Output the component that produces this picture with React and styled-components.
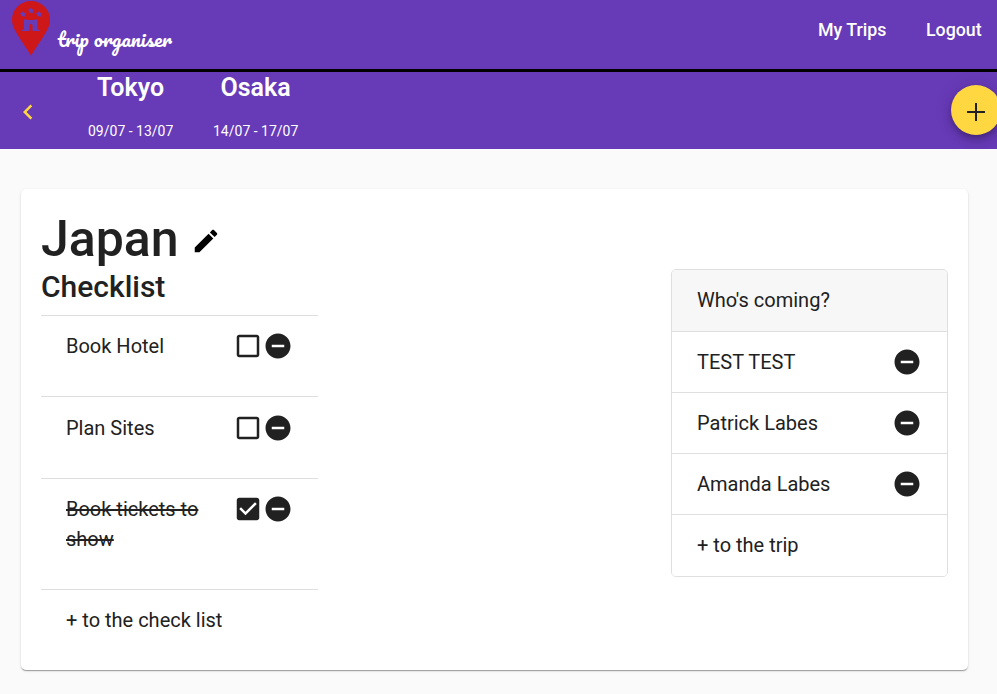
import React from "react";
import styled, { createGlobalStyle } from "styled-components";

const GlobalStyle = createGlobalStyle`
  * { box-sizing: border-box; }
  html, body { margin: 0; padding: 0; overflow: hidden; }
  body {
    background: #fafafa;
    color: #212121;
    font-family: Roboto, sans-serif;
    font-size: 20px;
    font-weight: 400;
    line-height: 30px;
  }
  h1, h2, h3, p, ul { margin: 0; padding: 0; }
`;

const Page = styled.div`
  height: 694px;
  overflow: hidden;
`;

const Header = styled.header`
  display: flex;
  justify-content: space-between;
  height: 72px;
  padding: 0 16px 0 12px;
  background: #673ab7;
  border-bottom: 3px solid #000;
  color: #fff;
`;

const Brand = styled.div`
  display: flex;
  gap: 8px;
`;

const Pin = styled.svg`
  width: 38px;
  height: 55px;
  margin-top: 1px;
  flex: none;
`;

const Wordmark = styled.svg`
  width: 116px;
  height: 40px;
  margin-top: 19px;
  overflow: visible;
  fill: #fff;
  font-family: Pacifico, cursive;
  font-size: 20px;
`;

const Nav = styled.nav`
  display: flex;
  gap: 40px;
  padding-top: 15px;
  font-size: 17.8px;
  font-weight: 500;
`;

const NavLink = styled.span`
  width: ${(p) => p.$width}px;
  white-space: nowrap;
`;

const CityBar = styled.section`
  display: flex;
  height: 77px;
  background: #673ab7;
  color: #fff;
`;

const Back = styled.svg`
  width: 30px;
  height: 30px;
  margin: 25px 0 0 13px;
  fill: #ffd740;
`;

const Cities = styled.div`
  display: flex;
  gap: 40px;
  margin-left: 45px;
`;

const City = styled.div`
  width: 85px;
  text-align: center;
  white-space: nowrap;
`;

const CityName = styled.h3`
  padding-top: 1px;
  font-size: 25px;
  font-weight: 600;
  line-height: 30px;
`;

const CityDates = styled.p`
  margin-top: 18px;
  font-size: 14px;
  font-weight: 400;
  line-height: 20px;
`;

const AddButton = styled.button`
  display: grid;
  place-items: center;
  flex: none;
  width: 50px;
  height: 50px;
  margin: 13px -4px 0 auto;
  padding: 4px 0 0;
  border: 0;
  border-radius: 50%;
  background: #ffd740;
  box-shadow: 0 3px 5px -1px rgba(0, 0, 0, 0.2), 0 6px 10px rgba(0, 0, 0, 0.14),
    0 1px 18px rgba(0, 0, 0, 0.12);
`;

const Card = styled.main`
  width: 947px;
  height: 481px;
  margin: 40px 0 0 21px;
  padding: 20px;
  border-radius: 5px;
  background: #fff;
  box-shadow: 0 2px 1px -1px rgba(0, 0, 0, 0.2), 0 1px 1px rgba(0, 0, 0, 0.14),
    0 1px 3px rgba(0, 0, 0, 0.12);
`;

const TitleRow = styled.div`
  display: flex;
  align-items: center;
  gap: 13px;
  height: 60px;
`;

const Title = styled.h1`
  width: 137px;
  font-size: 50px;
  font-weight: 500;
  line-height: 60px;
`;

const EditButton = styled.span`
  display: flex;
  padding-top: 3px;
`;

const Columns = styled.div`
  display: flex;
  justify-content: space-between;
  align-items: flex-start;
`;

const Checklist = styled.section`
  width: 277px;
`;

const Subtitle = styled.h2`
  height: 46px;
  font-size: 30px;
  font-weight: 500;
  line-height: 36px;
`;

const CheckItem = styled.div`
  display: flex;
  height: ${(p) => p.$height}px;
  padding: ${(p) => p.$top || 15}px 25px 0;
  border-top: 1px solid #dedede;
`;

const CheckLabel = styled.span`
  flex: none;
  width: 167px;
  padding-right: ${(p) => (p.$wrap ? "30px" : "0")};
  text-decoration: ${(p) => (p.$done ? "line-through" : "none")};
`;

const Actions = styled.span`
  display: flex;
  height: 30px;
`;

const Icon = styled.svg`
  flex: none;
  width: 30px;
  height: 30px;
  fill: ${(p) => (p.$black ? "#000" : "#212121")};
`;

const Guests = styled.section`
  width: 277px;
  border: 1px solid #dfdfdf;
  border-radius: 5px;
  overflow: hidden;
`;

const GuestRow = styled.div`
  display: flex;
  justify-content: space-between;
  align-items: flex-start;
  height: ${(p) => (p.$head ? 62 : 61)}px;
  padding: 15px 25px 0;
  background: ${(p) => (p.$head ? "#f7f7f7" : "#fff")};
  border-bottom: 1px solid #dfdfdf;

  &:last-child {
    border-bottom: 0;
  }
`;

const CHECKED =
  "M19 3H5c-1.11 0-2 .9-2 2v14c0 1.1.89 2 2 2h14c1.11 0 2-.9 2-2V5c0-1.1-.89-2-2-2zm-9 14l-5-5 1.41-1.41L10 14.17l7.59-7.59L19 8l-9 9z";
const UNCHECKED =
  "M19 5v14H5V5h14m0-2H5c-1.1 0-2 .9-2 2v14c0 1.1.9 2 2 2h14c1.1 0 2-.9 2-2V5c0-1.1-.9-2-2-2z";
const REMOVE =
  "M12 2C6.48 2 2 6.48 2 12s4.48 10 10 10 10-4.48 10-10S17.52 2 12 2zm5 11H7v-2h10v2z";
const EDIT =
  "M3 17.25V21h3.75L17.81 9.94l-3.75-3.75L3 17.25zM20.71 7.04c.39-.39.39-1.02 0-1.41l-2.34-2.34c-.39-.39-1.02-.39-1.41 0l-1.83 1.83 3.75 3.75 1.83-1.83z";

const Glyph = ({ d, black }) => (
  <Icon viewBox="0 0 24 24" $black={black}>
    <path d={d} />
  </Icon>
);

const STAR = "0,-3 1.1,-1.2 3.1,-0.8 1.8,0.8 2,2.8 0,2.1 -2,2.8 -1.8,0.8 -3.1,-0.8 -1.1,-1.2";

const cities = [
  { name: "Tokyo", dates: "09/07 - 13/07" },
  { name: "Osaka", dates: "14/07 - 17/07" },
];

const tasks = [
  { label: "Book Hotel", height: 81 },
  { label: "Plan Sites", height: 82, top: 16 },
  { label: "Book tickets to show", height: 111, done: true, wrap: true },
];

const guests = ["TEST TEST", "Patrick Labes", "Amanda Labes"];

export default function App() {
  return (
    <Page>
      <GlobalStyle />
      <Header>
        <Brand>
          <Pin viewBox="0 0 38 55">
            <path
              d="M19 0C8.500 0 0 8.200 0 18.700c0 5 2 9 4.400 13.100C8.800 39.300 14.200 47 19 54.500 23.800 47 29.200 39.300 33.600 31.800 36 27.700 38 23.700 38 18.700 38 8.200 29.500 0 19 0z"
              fill="#cd1719"
            />
            <g fill="#673ab7">
              <polygon points={STAR} transform="translate(19 9.500)" />
              <polygon points={STAR} transform="translate(11 13)" />
              <polygon points={STAR} transform="translate(27 13)" />
              <path d="M12 18.200l4.500.8h5l4-.8v10l2.500.8v1h-7.500v-5.500c0-2-3-2-3 0V30H10v-1l2-.8z" />
            </g>
          </Pin>
          <Wordmark viewBox="0 0 116 40">
            <text x="-0.500" y="28" textLength="114.500" lengthAdjust="spacingAndGlyphs">
              trip organiser
            </text>
          </Wordmark>
        </Brand>
        <Nav>
          <NavLink $width={68}>My Trips</NavLink>
          <NavLink $width={55}>Logout</NavLink>
        </Nav>
      </Header>
      <CityBar>
        <Back viewBox="0 0 24 24">
          <path d="M15.410 7.410L14 6l-6 6 6 6 1.410-1.410L10.830 12z" />
        </Back>
        <Cities>
          {cities.map((c) => (
            <City key={c.name}>
              <CityName>{c.name}</CityName>
              <CityDates>{c.dates}</CityDates>
            </City>
          ))}
        </Cities>
        <AddButton aria-label="Add city">
          <svg width="18" height="18" viewBox="0 0 18 18">
            <path d="M0 9h18M9 0v18" stroke="#212121" strokeWidth="2" />
          </svg>
        </AddButton>
      </CityBar>
      <Card>
        <TitleRow>
          <Title>Japan</Title>
          <EditButton>
            <Glyph d={EDIT} black />
          </EditButton>
        </TitleRow>
        <Columns>
          <Checklist>
            <Subtitle>Checklist</Subtitle>
            {tasks.map((t) => (
              <CheckItem key={t.label} $height={t.height} $top={t.top}>
                <CheckLabel $done={t.done} $wrap={t.wrap}>
                  {t.label}
                </CheckLabel>
                <Actions>
                  <Glyph d={t.done ? CHECKED : UNCHECKED} />
                  <Glyph d={REMOVE} />
                </Actions>
              </CheckItem>
            ))}
            <CheckItem $height={61}>
              <CheckLabel>+ to the check list</CheckLabel>
            </CheckItem>
          </Checklist>
          <Guests>
            <GuestRow $head>Who's coming?</GuestRow>
            {guests.map((g) => (
              <GuestRow key={g}>
                {g}
                <Glyph d={REMOVE} />
              </GuestRow>
            ))}
            <GuestRow>+ to the trip</GuestRow>
          </Guests>
        </Columns>
      </Card>
    </Page>
  );
}
